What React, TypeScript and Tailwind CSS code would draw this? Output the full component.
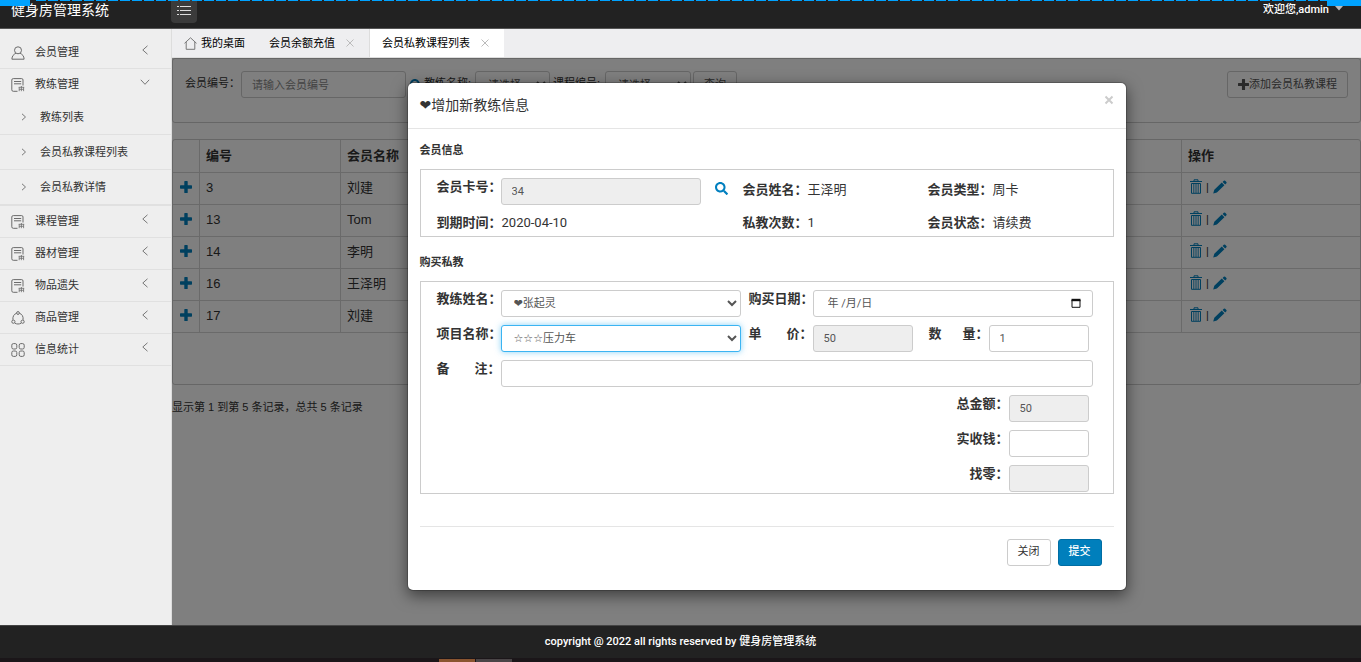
import React from 'react';
import { FaPlus, FaSearch } from 'react-icons/fa';

type IconName = 'user' | 'note' | 'ring' | 'grid';

interface MenuItem {
  title: string;
  icon: IconName;
  children?: string[];
}

const MENU: MenuItem[] = [
  { title: '会员管理', icon: 'user' },
  { title: '教练管理', icon: 'note', children: ['教练列表', '会员私教课程列表', '会员私教详情'] },
  { title: '课程管理', icon: 'note' },
  { title: '器材管理', icon: 'note' },
  { title: '物品遗失', icon: 'note' },
  { title: '商品管理', icon: 'ring' },
  { title: '信息统计', icon: 'grid' },
];

const MEMBERS = [
  { id: 3, name: '刘建' },
  { id: 13, name: 'Tom' },
  { id: 14, name: '李明' },
  { id: 16, name: '王泽明' },
  { id: 17, name: '刘建' },
];

const MenuIcon = ({ name }: { name: IconName }) => (
  <svg viewBox="0 0 14 14" className="h-3.5 w-3.5 shrink-0" fill="none" stroke="#6b6b6b">
    {name === 'user' && (
      <>
        <circle cx="7" cy="4.3" r="3.5" />
        <path d="M4.9 7.3C2.6 8.3 1 10 .9 13.2h12.2C13 10 11.4 8.3 9.1 7.3" />
      </>
    )}
    {name === 'note' && (
      <>
        <path d="M6.5 13.3H2.3Q.8 13.3.8 11.8V2Q.8.6 2.3.6h8.4Q12 .6 12 2v5.5" />
        <path d="M3 3.5h7.2M3 5.8h7.2" />
        <path d="M7.7 9.3h5.5M8.2 9.3v3.9M10.4 8v5.2M12.6 9.3v3.9M8.2 11.3h4.4" strokeWidth="0.8" />
      </>
    )}
    {name === 'ring' && (
      <>
        <path d="M5.3 2.4C3 3.2 1.6 5.3 1.9 8.8M8.7 2.4c2.3.8 3.7 2.9 3.4 6.4M3.9 12.2c2 1.1 4.2 1.1 6.2 0" />
        <circle cx="7" cy="2" r="1.4" />
        <circle cx="2.4" cy="10.7" r="1.6" />
        <circle cx="11.6" cy="10.7" r="1.6" />
      </>
    )}
    {name === 'grid' && (
      <>
        <rect x="0.8" y="0.6" width="5" height="5.4" rx="1.6" />
        <rect x="8.2" y="0.6" width="5" height="5.4" rx="1.6" />
        <rect x="0.8" y="8" width="5" height="5.4" rx="1.6" />
        <rect x="8.2" y="8" width="5" height="5.4" rx="1.6" />
      </>
    )}
  </svg>
);

const Chevron = ({ dir }: { dir: 'left' | 'right' | 'down' }) => (
  <svg viewBox="0 0 10 10" className="h-2.5 w-2.5 shrink-0" fill="none" stroke="#777">
    {dir === 'left' && <path d="M7.5.8 2.8 5l4.7 4.2" />}
    {dir === 'right' && <path d="M3 1.8 6.5 5 3 8.2" />}
    {dir === 'down' && <path d="M.8 2.8 5 7.3l4.2-4.5" />}
  </svg>
);

const TrashIcon = () => (
  <svg viewBox="0 0 12 15" className="h-[15px] w-3" fill="none" stroke="currentColor">
    <path d="M0 2.5h12M4 2.5V.8h4v1.7M1.5 4.5v9.8h9V4.5z" />
    <path d="M3.8 5v9M6 5v9M8.2 5v9" strokeWidth="0.9" />
  </svg>
);

const PencilIcon = () => (
  <svg viewBox="0 0 14 14" className="h-3.5 w-3.5" fill="currentColor">
    <path d="M.2 13.6 1.3 9.8 8.8 2.6l2.6 2.7-7.5 7.2zM9.6 1.9l1.2-1.2q.7-.6 1.4 0l1.2 1.2q.6.7 0 1.4l-1.2 1.2z" />
  </svg>
);

// Thick rounded plus, as in the glyphicon set
const PlusIcon = ({ className }: { className: string }) => (
  <svg viewBox="0 0 12 12" className={className} fill="currentColor">
    <path d="M4.9 0h2.2q.6 0 .6.6v3.7h3.7q.6 0 .6.6v2.2q0 .6-.6.6H7.7v3.7q0 .6-.6.6H4.9q-.6 0-.6-.6V7.7H.6Q0 7.7 0 7.1V4.9q0-.6.6-.6h3.7V.6q0-.6.6-.6z" />
  </svg>
);

const CloseIcon = () => (
  <svg viewBox="0 0 10 10" className="h-2.5 w-2.5" fill="none" stroke="#bbb">
    <path d="M1.5 1.5l7 7M8.5 1.5l-7 7" />
  </svg>
);

const Header = () => (
  <header className="relative flex h-[29px] items-start border-b border-[#555] bg-[#222] text-white">
    <h1 className="w-[171px] pl-[11px] text-sm leading-5">健身房管理系统</h1>
    <button type="button" aria-label="菜单" className="flex h-[23px] w-[26px] items-start justify-center rounded-b-sm bg-[#3b3b3b] pt-[5px]">
      <svg viewBox="0 0 14 10" className="h-2.5 w-3.5" stroke="#ddd">
        <path d="M0 1.5h2M3 1.5h11M0 5.5h2M3 5.5h11M0 9.5h2M3 9.5h11" />
      </svg>
    </button>
    <a href="#" className="ml-auto flex items-start gap-1.5 pr-[18px] font-[Roboto,'Noto_Sans_CJK_SC',sans-serif] text-[11px] font-medium leading-5">
      欢迎您,admin
      <svg viewBox="0 0 8 5" className="mt-1.5 h-[5px] w-2" fill="#bbb">
        <path d="M0 0h8L4 4.5z" />
      </svg>
    </a>
    {/* capture frame along the top edge */}
    <div className="pointer-events-none absolute inset-x-0 top-0 flex items-start">
      <div className="h-1.5 w-[30px] bg-[#00a2ff]" />
      <div className="ml-1.5 h-px flex-1 bg-[repeating-linear-gradient(90deg,#00a2ff_0_10px,transparent_10px_12px)]" />
      <div className="h-1.5 w-[34px] bg-[#00a2ff]" />
    </div>
  </header>
);

const Sidebar = () => (
  <nav className="w-[172px] shrink-0 border-r border-[#ddd] bg-[#eee] pt-2 text-[11px] text-[#333]">
    {MENU.map((item) => (
      <div key={item.title} className={item.children ? 'border-b border-[#e0e0e0]' : ''}>
        <a
          href="#"
          className={`flex items-center pl-[11px] pr-[21px] ${item.children ? 'h-[31px]' : 'h-8 border-b border-[#e0e0e0]'}`}
        >
          <MenuIcon name={item.icon} />
          <span className="ml-2.5 flex-1">{item.title}</span>
          <span className="pb-1.5">
            <Chevron dir={item.children ? 'down' : 'left'} />
          </span>
        </a>
        {item.children?.map((child) => (
          <a key={child} href="#" className="flex h-[35px] items-center gap-[11px] border-b border-[#e0e0e0] pl-[19px]">
            <Chevron dir="right" />
            {child}
          </a>
        ))}
      </div>
    ))}
  </nav>
);

const TabBar = () => (
  <div className="flex h-[29px] items-stretch border-b border-[#ddd] bg-[#eeeef0] text-[11px] text-black">
    <a href="#" className="flex items-center gap-1 px-3">
      <svg viewBox="0 0 13 13" className="h-[13px] w-[13px]" fill="none" stroke="#777">
        <path d="M.5 6.3 6.5.8l6 5.5M2.2 5v7.3h8.6V5" />
      </svg>
      我的桌面
    </a>
    <div className="flex items-center gap-2.5 pl-3 pr-3.5">
      <a href="#">会员余额充值</a>
      <button type="button" aria-label="关闭标签"><CloseIcon /></button>
    </div>
    <div className="flex items-center gap-2.5 border-l border-[#ddd] bg-white pl-3 pr-3.5">
      <a href="#">会员私教课程列表</a>
      <button type="button" aria-label="关闭标签"><CloseIcon /></button>
    </div>
  </div>
);

const control = 'h-[27px] rounded-[3px] border border-[#ccc] bg-white text-[11px] text-[#555]';

const SearchPanel = () => (
  <div className="flex h-[65px] items-start rounded-[3px] border border-[#ccc] px-3 pt-3 text-[11px] text-[#333]">
    <label htmlFor="q-member" className="pr-px leading-6">会员编号：</label>
    <input id="q-member" placeholder="请输入会员编号" className={`${control} w-[165px] px-2.5 placeholder:text-[#888]`} />
    <button type="button" aria-label="查找" className="ml-1 mt-2 text-[#007fbf]"><FaSearch size={12} /></button>
    <label htmlFor="q-coach" className="w-[53px] pl-0.5 leading-6">教练名称:</label>
    <select id="q-coach" className={`${control} w-[75px] px-2`}><option>请选择</option></select>
    <label htmlFor="q-course" className="ml-0.5 w-[53px] pl-px leading-6">课程编号:</label>
    <select id="q-course" className={`${control} w-[86px] px-2`}><option>请选择</option></select>
    <button type="button" className={`${control} ml-0.5 w-11`}>查询</button>
    <button type="button" className={`${control} ml-auto flex items-center px-2.5 text-[#333]`}>
      <PlusIcon className="h-[11px] w-[11px]" />
      添加会员私教课程
    </button>
  </div>
);

const MemberTable = () => (
  <div className="mt-4 rounded-[3px] border border-[#ccc] pb-[51px]">
    <table className="w-full table-fixed border-separate border-spacing-0 text-left text-[13px] leading-5 text-[#333] [&_td]:border-b [&_td]:border-[#d4d4d4] [&_th]:border-b [&_th]:border-[#d4d4d4]">
      <colgroup>
        <col className="w-[27px]" />
        <col className="w-[141px]" />
        <col />
        <col className="w-[178px]" />
      </colgroup>
      <thead>
        <tr className="h-[33px]">
          <th className="border-r" />
          <th className="border-r px-1.5">编号</th>
          <th className="border-r px-1.5">会员名称</th>
          <th className="px-1.5">操作</th>
        </tr>
      </thead>
      <tbody>
        {MEMBERS.map((m) => (
          <tr key={m.id} className="h-8">
            <td className="border-r pb-1 pl-[7px]">
              <button type="button" aria-label="展开" className="block text-[#0080bf]"><PlusIcon className="h-3 w-3" /></button>
            </td>
            <td className="border-r px-1.5 pb-0.5">{m.id}</td>
            <td className="border-r px-1.5 pb-0.5">{m.name}</td>
            <td className="px-1.5">
              <div className="flex items-center gap-1 pb-1 pl-0.5 text-[11px] leading-4">
                <a href="#" aria-label="删除" className="text-[#0080bf]"><TrashIcon /></a>
                <span>|</span>
                <a href="#" aria-label="编辑" className="text-[#0080bf]"><PencilIcon /></a>
              </div>
            </td>
          </tr>
        ))}
      </tbody>
    </table>
  </div>
);

interface FieldLabelProps {
  htmlFor: string;
  text: string;
  className?: string;
}

// Two-character labels are spread over the width of a four-character one
const FieldLabel: React.FC<FieldLabelProps> = ({ htmlFor, text, className = 'w-16' }) => (
  <label htmlFor={htmlFor} className={`flex shrink-0 justify-between whitespace-nowrap text-[13px] font-bold leading-[18px] ${className}`}>
    {text.length === 2 ? (
      <>
        <span>{text[0]}</span>
        <span>{text[1]}：</span>
      </>
    ) : (
      `${text}：`
    )}
  </label>
);

const Info = ({ label, value }: { label: string; value: string }) => (
  <div className="flex text-[13px] leading-6">
    <span className="font-bold">{label}：</span>
    <span>{value}</span>
  </div>
);

const readonly = 'h-[27px] rounded-[3px] border border-[#ccc] bg-[#eee] px-2.5 text-[11px] text-[#555]';

const CourseModal = () => (
  <div
    role="dialog"
    aria-label="增加新教练信息"
    className="w-[720px] max-w-full rounded-md border border-black/20 bg-white bg-clip-padding font-[Roboto,'DejaVu_Sans','Noto_Sans_CJK_SC',sans-serif] text-[#333] shadow-[0_5px_15px_rgba(0,0,0,0.5)]"
  >
    <div className="flex h-[46px] items-start justify-between border-b border-[#e5e5e5] px-3 pt-3">
      <h3 className="text-sm leading-5">❤增加新教练信息</h3>
      <button type="button" aria-label="关闭窗口">
        <svg viewBox="0 0 10 10" className="h-2.5 w-2.5" fill="none" stroke="#ccc" strokeWidth="2">
          <path d="M1.5 1.5l7 7M8.5 1.5l-7 7" />
        </svg>
      </button>
    </div>

    <div className="px-3 pb-6">
      <h4 className="pt-3.5 text-[11px] font-bold leading-4">会员信息</h4>
      <div className="mt-2.5 grid grid-cols-[306px_185px_1fr] border border-[#ccc] pb-px pl-4 pt-2">
        <div className="flex h-[33px] items-start">
          <FieldLabel htmlFor="card" text="会员卡号" />
          <input id="card" readOnly defaultValue="34" className={`${readonly} w-[200px]`} />
          <button type="button" aria-label="查找会员" className="ml-3.5 mt-1 text-[#007fbf]"><FaSearch size={13} /></button>
        </div>
        <Info label="会员姓名" value="王泽明" />
        <Info label="会员类型" value="周卡" />
        <Info label="到期时间" value="2020-04-10" />
        <Info label="私教次数" value="1" />
        <Info label="会员状态" value="请续费" />
      </div>

      <h4 className="pt-[18px] text-[11px] font-bold leading-4">购买私教</h4>
      <form className="mt-2.5 flex flex-col gap-2 border border-[#ccc] pb-px pl-4 pr-5 pt-2">
        <div className="flex">
          <FieldLabel htmlFor="coach" text="教练姓名" />
          <select id="coach" className={`${control} w-[240px] px-2`}><option>❤张起灵</option></select>
          <FieldLabel htmlFor="date" text="购买日期" className="ml-2 w-16" />
          <div className="relative flex-1">
            <input id="date" placeholder="年 /月/日" className={`${control} w-full px-3.5 placeholder:text-[#555]`} />
            <svg viewBox="0 0 10 10" className="absolute right-3 top-2 h-2.5 w-2.5" fill="none" stroke="#111">
              <path d="M1 2h8v7.3H1z" />
              <path d="M.5 2h9" strokeWidth="2.4" />
            </svg>
          </div>
        </div>
        <div className="flex">
          <FieldLabel htmlFor="item" text="项目名称" />
          <select
            id="item"
            className="h-[27px] w-[240px] rounded-[3px] border border-[#3bb4f2] bg-white px-2 text-[11px] text-[#555] shadow-[0_0_6px_rgba(59,180,242,0.6)]"
          >
            <option>☆☆☆压力车</option>
          </select>
          <FieldLabel htmlFor="price" text="单价" className="ml-2 w-16" />
          <input id="price" readOnly defaultValue="50" className={`${readonly} w-[100px]`} />
          <FieldLabel htmlFor="count" text="数量" className="ml-4 w-[60px]" />
          <input id="count" defaultValue="1" className={`${control} w-[100px] px-2.5`} />
        </div>
        <div className="flex">
          <FieldLabel htmlFor="remark" text="备注" />
          <input id="remark" className={`${control} flex-1 px-2.5`} />
        </div>
        <div className="flex justify-end pr-1">
          <FieldLabel htmlFor="total" text="总金额" className="" />
          <input id="total" readOnly defaultValue="50" className={`${readonly} w-20`} />
        </div>
        <div className="flex justify-end pr-1">
          <FieldLabel htmlFor="paid" text="实收钱" className="" />
          <input id="paid" className={`${control} w-20 px-2.5`} />
        </div>
        <div className="flex justify-end pr-1">
          <label htmlFor="change" className="text-[13px] font-bold leading-[18px]">找零：</label>
          <input id="change" readOnly className={`${readonly} w-20`} />
        </div>
      </form>

      <div className="mt-8 flex justify-end gap-[7px] border-t border-[#e5e5e5] pr-3 pt-3 text-[11px]">
        <button type="button" className="h-[27px] w-11 rounded-[3px] border border-[#ccc] bg-white">关闭</button>
        <button type="button" className="h-[27px] w-11 rounded-[3px] border border-[#006da3] bg-[#007fbc] font-medium text-white">提交</button>
      </div>
    </div>
  </div>
);

export default function App() {
  return (
    <div className="flex min-h-screen flex-col bg-white font-['Liberation_Sans','DejaVu_Sans','Noto_Sans_CJK_SC',sans-serif]">
      <Header />
      <div className="flex flex-1">
        <Sidebar />
        <main className="flex min-w-0 flex-1 flex-col">
          <TabBar />
          <div className="relative flex-1">
            <SearchPanel />
            <MemberTable />
            <p className="mt-3 text-[11px] leading-5 text-[#333]">显示第 1 到第 5 条记录，总共 5 条记录</p>
            <div className="absolute inset-0 flex items-start justify-center bg-black/50 pt-6">
              <CourseModal />
            </div>
          </div>
        </main>
      </div>
      <footer className="border-t border-[#444] bg-[#222] text-center font-[Roboto,'Noto_Sans_CJK_SC',sans-serif] text-[11px] font-medium text-white">
        <p className="py-2 leading-4">copyright @ 2022 all rights reserved by 健身房管理系统</p>
        <div className="flex h-1 gap-px bg-[#1b1619] pl-[439px] pt-px">
          <div className="w-9 bg-[#8a5530]" />
          <div className="w-9 bg-[#4a4547]" />
        </div>
      </footer>
    </div>
  );
}
